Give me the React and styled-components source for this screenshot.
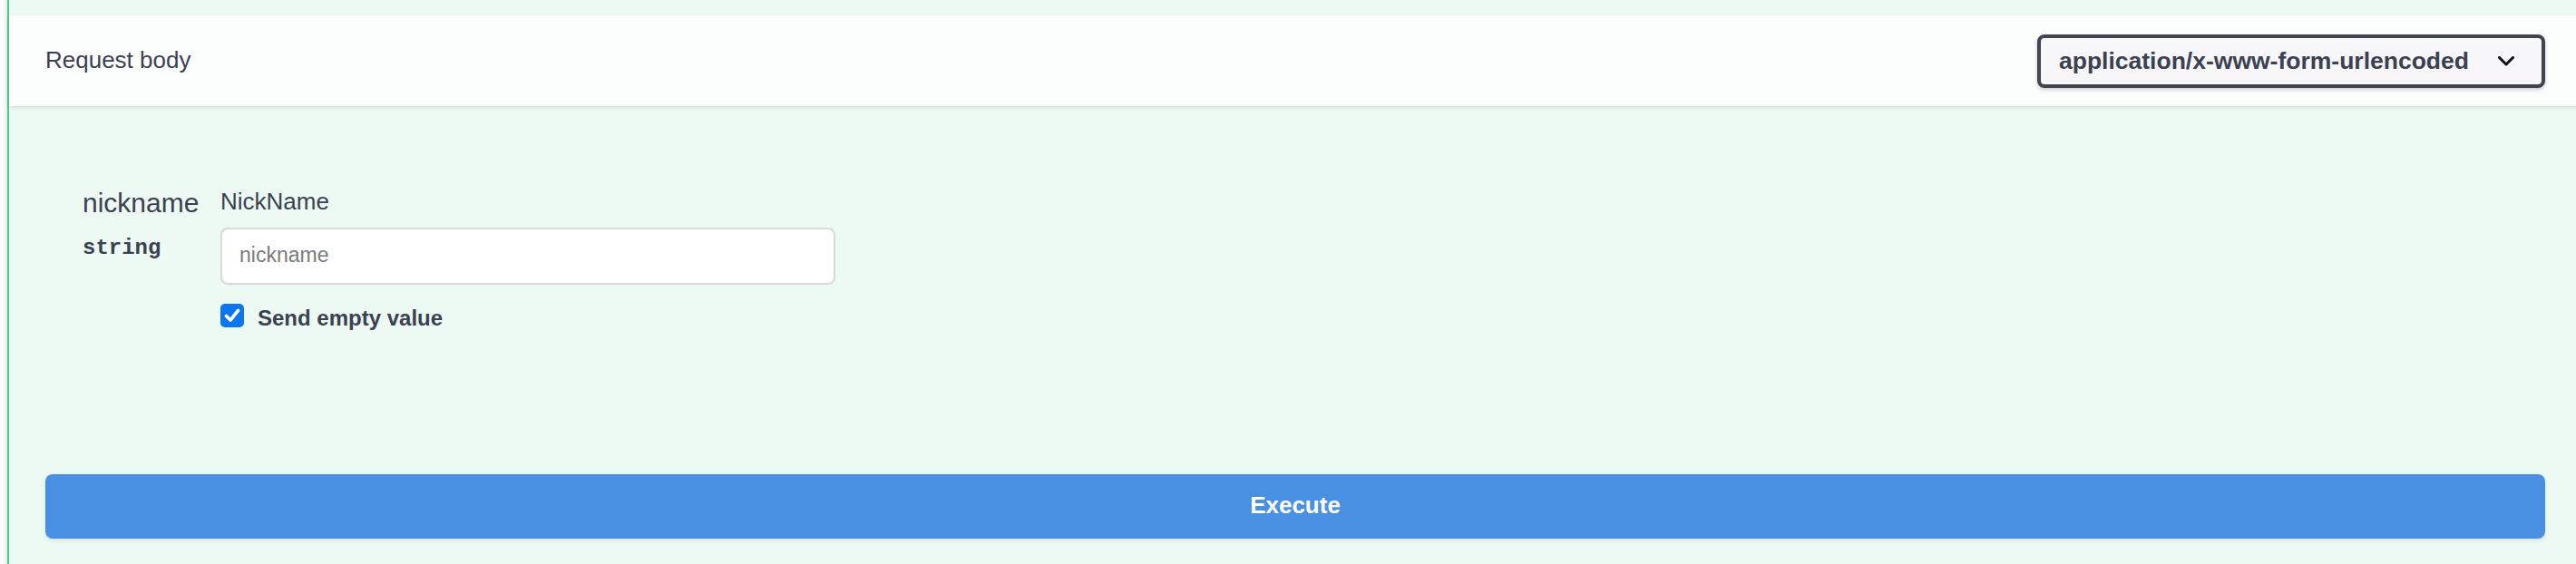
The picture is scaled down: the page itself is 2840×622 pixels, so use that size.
import React from "react";
import styled, { createGlobalStyle } from "styled-components";

const GlobalStyle = createGlobalStyle`
    html, body {
        margin: 0;
        padding: 0;
        background: #ffffff;
        overflow: hidden;
    }
    body {
        font-family: "Liberation Sans", Arial, sans-serif;
        color: #3b4151;
    }
`;

export const Page = styled.div`
    width: 2840px;
    height: 622px;
    overflow: hidden;
`;

export const OpBlock = styled.div`
    margin: -20px 0 0 8px;
    width: 2838px;
    min-height: 660px;
    padding-top: 35px;
    box-sizing: border-box;
    border: 2px solid #49cc90;
    background: #edfaf4;
    box-shadow: 0 0 6px rgba(0, 0, 0, 0.19);
`;

export const SectionHeader = styled.div`
    display: flex;
    align-items: center;
    justify-content: space-between;
    height: 100px;
    padding: 0 38px 0 40px;
    background: rgba(255, 255, 255, 0.8);
    box-shadow: 0 2px 4px rgba(0, 0, 0, 0.1);
`;

export const HeaderTitle = styled.h4`
    margin: 0 0 2px;
    font-size: 26px;
    font-weight: 400;
    color: #3b4151;
`;

export const SelectBox = styled.div`
    display: flex;
    align-items: center;
    height: 59px;
    box-sizing: border-box;
    padding: 0 30px 0 20px;
    gap: 32px;
    border: 4px solid #41444e;
    border-radius: 8px;
    background: #f7f6f8;
    box-shadow: 0 2px 4px rgba(0, 0, 0, 0.2);
    font-size: 26.5px;
    font-weight: 700;
    color: #3b4151;
`;

export const Params = styled.div`
    padding: 89px 0 0 81px;
`;

export const ParamRow = styled.div`
    display: flex;
`;

export const NameCell = styled.div`
    width: 152px;
`;

export const ParamName = styled.div`
    font-size: 30px;
    line-height: 36px;
    color: #3b4151;
`;

export const ParamType = styled.div`
    margin-top: 17px;
    font-family: "Liberation Mono", "Courier New", monospace;
    font-size: 24px;
    line-height: 30px;
    font-weight: 700;
    color: #3b4151;
`;

export const DescCell = styled.div`
    display: flex;
    flex-direction: column;
`;

export const Description = styled.div`
    font-size: 26px;
    line-height: 32px;
    color: #3b4151;
`;

export const TextInput = styled.input`
    margin-top: 13px;
    width: 678px;
    height: 63px;
    box-sizing: border-box;
    padding: 0 19px 2px;
    border: 2px solid #d9d9d9;
    border-radius: 8px;
    background: #ffffff;
    font-family: "Liberation Sans", Arial, sans-serif;
    font-size: 23px;
    color: #3b4151;
    outline: none;

    &::placeholder {
        color: #7b7b7b;
    }
`;

export const CheckRow = styled.label`
    display: flex;
    align-items: flex-start;
    gap: 15px;
    margin-top: 22px;
    font-size: 24px;
    line-height: 30px;
    font-weight: 700;
    color: #3b4151;
`;

export const CheckBox = styled.span`
    display: flex;
    align-items: center;
    justify-content: center;
    width: 26px;
    height: 26px;
    margin-top: -1px;
    border-radius: 5px;
    background: #0b76f0;
`;

export const ExecuteWrapper = styled.div`
    padding: 157px 38px 0 40px;
`;

export const ExecuteButton = styled.button`
    display: block;
    width: 100%;
    height: 71px;
    padding: 0 0 3px;
    border: none;
    border-radius: 8px;
    background: #4990e2;
    box-shadow: 0 2px 4px rgba(0, 0, 0, 0.1);
    font-family: "Liberation Sans", Arial, sans-serif;
    font-size: 26px;
    font-weight: 700;
    color: #ffffff;
`;

const Chevron = () => (
    <svg width="18" height="11" viewBox="0 0 18 11">
        <path d="M1.5 1.5 L9 9 L16.5 1.5" fill="none" stroke="#111" strokeWidth="3" strokeLinecap="round" strokeLinejoin="round" />
    </svg>
);

const Check = () => (
    <svg width="18" height="16" viewBox="0 0 18 16">
        <path d="M2.5 8.5 L7 13 L15.5 2.5" fill="none" stroke="#fff" strokeWidth="3.6" strokeLinecap="round" strokeLinejoin="round" />
    </svg>
);

export default function App() {
    return (
        <Page>
            <GlobalStyle />
            <OpBlock>
                <SectionHeader>
                    <HeaderTitle>Request body</HeaderTitle>
                    <SelectBox>
                        <span>application/x-www-form-urlencoded</span>
                        <Chevron />
                    </SelectBox>
                </SectionHeader>
                <Params>
                    <ParamRow>
                        <NameCell>
                            <ParamName>nickname</ParamName>
                            <ParamType>string</ParamType>
                        </NameCell>
                        <DescCell>
                            <Description>NickName</Description>
                            <TextInput type="text" placeholder="nickname" />
                            <CheckRow>
                                <CheckBox><Check /></CheckBox>
                                Send empty value
                            </CheckRow>
                        </DescCell>
                    </ParamRow>
                </Params>
                <ExecuteWrapper>
                    <ExecuteButton>Execute</ExecuteButton>
                </ExecuteWrapper>
            </OpBlock>
        </Page>
    );
}
